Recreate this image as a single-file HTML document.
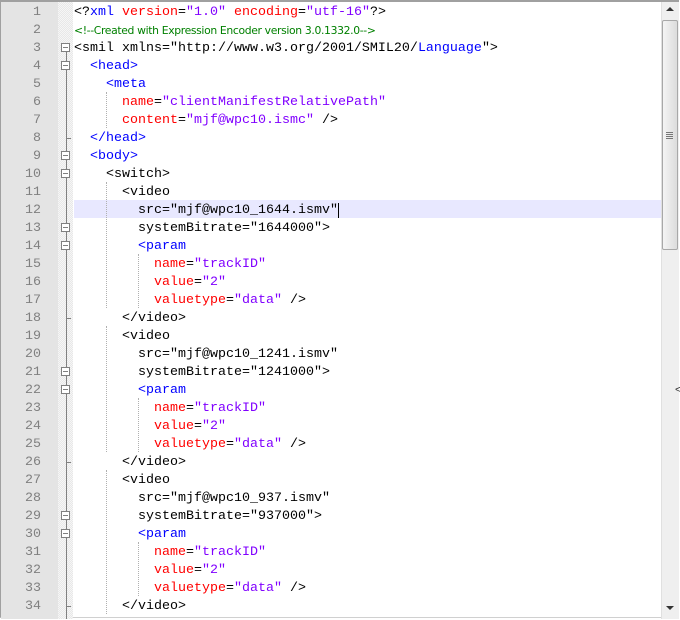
<!DOCTYPE html>
<html><head><meta charset="utf-8"><style>
body{margin:0;width:680px;height:620px;overflow:hidden;background:#fff;position:relative;font-family:"Liberation Mono",monospace;font-size:13.33px}
#frame{position:absolute;left:0;top:0;width:679px;height:618px;border-top:2px solid #a0a0a0;border-left:1px solid #a0a0a0;border-bottom:1px solid #d0d0d0;box-sizing:border-box}
#nums{position:absolute;left:1px;top:2px;width:57px;height:617px;background:#e4e4e4}
#fold{position:absolute;left:58px;top:2px;width:15px;height:617px;background:#f2f2f2;background-image:repeating-conic-gradient(#e8e8e8 0 25%,#f6f6f6 0 50%);background-size:2px 2px}
.n{position:absolute;left:0;width:41px;text-align:right;color:#808080;height:18px;line-height:18px}
.l{position:absolute;left:74px;height:18px;line-height:18px;white-space:pre;color:#000}
.b{color:#0000ff}.r{color:#ff0000}.p{color:#8000ff}
.c{color:#008000;font-family:"DejaVu Sans","Liberation Sans",sans-serif;font-size:10.8px;letter-spacing:-0.35px}
.box{position:absolute;left:61px;width:9px;height:9px;border:1px solid #808080;background:#fff;box-sizing:border-box}
.box:after{content:"";position:absolute;left:1px;top:3px;width:5px;height:1px;background:#808080}
.tick{position:absolute;left:66px;width:5px;height:1px;background:#808080}
.g{position:absolute;width:0;border-left:1px dotted #b0b0b0}
#hl{position:absolute;left:74px;top:200px;width:587px;height:18px;background:#e8e8ff}
#sb{position:absolute;left:661px;top:2px;width:18px;height:617px;background:#efefef;border-left:1px solid #e0e0e0;box-sizing:border-box}
#thumb{position:absolute;left:662px;top:20px;width:16px;height:230px;border:1px solid #a8a8a8;border-radius:2px;background:linear-gradient(90deg,#f4f4f4,#dcdcdc);box-sizing:border-box}
</style></head><body>
<div id="frame"></div>
<div id="nums"></div>
<div id="fold"></div>
<div style="position:absolute;left:66px;top:47px;width:1px;height:572px;background:#808080"></div>
<div id="hl"></div>
<div id="sb"></div>
<div id="thumb"></div>
<div style="position:absolute;left:666px;top:132px;width:7px;height:8px;background:repeating-linear-gradient(#777 0 1px,transparent 1px 2px)"></div>
<div style="position:absolute;left:666px;top:7px;width:0;height:0;border-left:4px solid transparent;border-right:4px solid transparent;border-bottom:4px solid #333"></div>
<div style="position:absolute;left:666px;top:606px;width:0;height:0;border-left:4px solid transparent;border-right:4px solid transparent;border-top:4px solid #333"></div>
<div style="position:absolute;left:675px;top:384px;color:#333;font-size:11px;font-family:'Liberation Sans',sans-serif">&lt;</div>
<div id="c"></div>
<script>
var L=[
'&lt;?<span class="b">xml</span> <span class="r">version</span>=<span class="p">"1.0"</span> <span class="r">encoding</span>=<span class="p">"utf-16"</span>?&gt;',
'<span class="c">&lt;!--Created with Expression Encoder version 3.0.1332.0--&gt;</span>',
'&lt;smil xmlns="http://www.w3.org/2001/SMIL20/<span class="b">Language</span>"&gt;',
'  <span class="b">&lt;head&gt;</span>',
'    <span class="b">&lt;meta</span>',
'      <span class="r">name</span>=<span class="p">"clientManifestRelativePath"</span>',
'      <span class="r">content</span>=<span class="p">"mjf@wpc10.ismc"</span> /&gt;',
'  <span class="b">&lt;/head&gt;</span>',
'  <span class="b">&lt;body&gt;</span>',
'    &lt;switch&gt;'];
function blk(a,b,cur){return [
'      &lt;video',
'        src="mjf@wpc10_'+a+'.ismv"'+(cur?'<span style="border-left:1px solid #000;margin-left:0"></span>':''),
'        systemBitrate="'+b+'"&gt;',
'        <span class="b">&lt;param</span>',
'          <span class="r">name</span>=<span class="p">"trackID"</span>',
'          <span class="r">value</span>=<span class="p">"2"</span>',
'          <span class="r">valuetype</span>=<span class="p">"data"</span> /&gt;',
'      &lt;/video&gt;'];}
L=L.concat(blk('1644','1644000',1),blk('1241','1241000'),blk('937','937000'));
var h='';
for(var i=0;i<L.length;i++){var t=4+18*i;
h+='<div class="n" style="top:'+t+'px">'+(i+1)+'</div><div class="l" style="top:'+t+'px">'+L[i]+'</div>';}
[3,4,9,10,13,14,21,22,29,30].forEach(function(n){h+='<div class="box" style="top:'+(2+18*(n-1)+5)+'px"></div>';});
[8,18,26,34].forEach(function(n){h+='<div class="tick" style="top:'+(2+18*(n-1)+10)+'px"></div>';});
function g(x,a,b){h+='<div class="g" style="left:'+x+'px;top:'+(2+18*(a-1))+'px;height:'+(18*(b-a+1))+'px"></div>';}
g(106,6,7);g(106,11,17);g(138,15,17);g(106,19,25);g(138,23,25);g(106,27,34);g(138,31,33);
document.getElementById('c').innerHTML=h;
</script>
</body></html>
